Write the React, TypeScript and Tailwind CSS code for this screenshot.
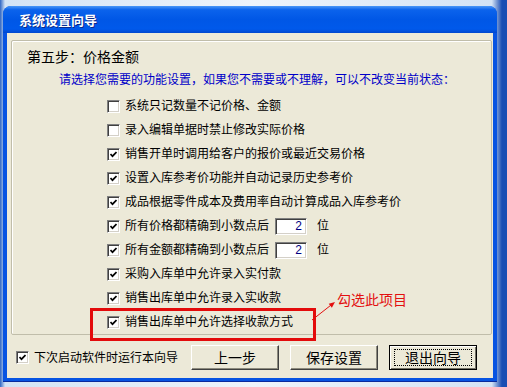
import React from "react";

const FONT = { fontFamily: '"Liberation Sans", "Noto Sans CJK SC", sans-serif' };

type Row = {
  label: string;
  checked: boolean;
  digits?: boolean;
};

const rows: Row[] = [
  { label: "系统只记数量不记价格、金额", checked: false },
  { label: "录入编辑单据时禁止修改实际价格", checked: false },
  { label: "销售开单时调用给客户的报价或最近交易价格", checked: true },
  { label: "设置入库参考价功能并自动记录历史参考价", checked: true },
  { label: "成品根据零件成本及费用率自动计算成品入库参考价", checked: true },
  { label: "所有价格都精确到小数点后", checked: true, digits: true },
  { label: "所有金额都精确到小数点后", checked: true, digits: true },
  { label: "采购入库单中允许录入实付款", checked: true },
  { label: "销售出库单中允许录入实收款", checked: true },
  { label: "销售出库单中允许选择收款方式", checked: true },
];

function CheckBox({ checked }: { checked: boolean }) {
  return (
    <span className="flex h-[13px] w-[13px] shrink-0 items-center justify-center border border-t-[#808080] border-l-[#808080] border-b-white border-r-white bg-white shadow-[inset_1px_1px_0_#404040,inset_-1px_-1px_0_#d4d0c8]">
      {checked && (
        <svg width="7" height="7" viewBox="0 0 7 7">
          <path d="M0.5 3 L2.5 5.2 L6.5 1" fill="none" stroke="#000" strokeWidth="1.7" />
        </svg>
      )}
    </span>
  );
}

function Button({ label, focused }: { label: string; focused?: boolean }) {
  return (
    <div
      className={
        focused
          ? "flex h-[25px] w-[88px] items-center justify-center border border-black bg-[#ece9d8] shadow-[inset_1px_1px_0_#fff,inset_-1px_-1px_0_#716f64]"
          : "flex h-[25px] w-[88px] items-center justify-center border border-t-white border-l-white border-b-[#404040] border-r-[#404040] bg-[#ece9d8] shadow-[inset_-1px_-1px_0_#8c8a7d]"
      }
    >
      <span
        className={
          focused
            ? "flex h-[17px] w-[78px] items-center justify-center border border-dotted border-black text-[14px] leading-[16px] text-black"
            : "text-[14px] leading-[16px] text-black"
        }
      >
        {label}
      </span>
    </div>
  );
}

export default function App() {
  return (
    <div
      style={FONT}
      className="h-[387px] w-[507px] overflow-hidden bg-[linear-gradient(90deg,#2f66c4_0%,#d3e3f5_1%,#eef4fb_50%,#d3e3f5_97%,#1a4db3_99%)] pl-[3px] pt-[6px]"
    >
      <div className="flex h-[376px] w-[494px] flex-col rounded-t-[8px] border-b border-[#0a2a9c] bg-[#0653e2]">
        {/* title bar */}
        <div className="flex h-[27px] shrink-0 items-center rounded-t-[8px] bg-[linear-gradient(180deg,#4a97f7_0%,#0b63ec_14%,#0057e6_50%,#0059eb_85%,#0047cf_100%)] pl-[16px] pt-[2px]">
          <span className="text-[13px] font-bold leading-[16px] text-white [text-shadow:1px_1px_0_#0b2a8a]">
            系统设置向导
          </span>
        </div>

        {/* client area */}
        <div className="relative mx-[4px] mb-[3px] flex flex-1 flex-col bg-[#ece9d8] pl-[4px] pr-[1px] pt-[7px]">
          <div className="flex h-[295px] flex-col rounded-[2px] border border-[#c0bdaa] pl-[15px] pt-[8px] shadow-[inset_1px_1px_0_#fff]">
            <div className="text-[14px] leading-[16px] text-black">第五步：价格金额</div>
            <div className="mt-[8px] pl-[32px] text-[12px] leading-[14px] text-[#0000c8]">
              请选择您需要的功能设置，如果您不需要或不理解，可以不改变当前状态：
            </div>
            <div className="mt-[7px] flex flex-col pl-[80px]">
              {rows.map((r) => (
                <div key={r.label} className="flex h-[24px] items-center gap-[5px]">
                  <CheckBox checked={r.checked} />
                  <span className="whitespace-nowrap text-[12px] leading-[14px] text-black">{r.label}</span>
                  {r.digits && (
                    <>
                      <span className="ml-[1px] flex h-[17px] w-[32px] items-center justify-end border border-t-[#808080] border-l-[#808080] border-b-white border-r-white bg-white pr-[4px] text-[12px] leading-[14px] text-[#000080] shadow-[inset_1px_1px_0_#404040,inset_-1px_-1px_0_#d4d0c8]">
                        2
                      </span>
                      <span className="ml-[5px] text-[12px] leading-[14px] text-black">位</span>
                    </>
                  )}
                </div>
              ))}
            </div>
          </div>

          {/* bottom bar */}
          <div className="mt-[10px] flex h-[25px] items-center pl-[5px] pr-[15px]">
            <CheckBox checked />
            <span className="ml-[5px] text-[12px] leading-[14px] text-black">下次启动软件时运行本向导</span>
            <div className="ml-auto flex gap-[11px]">
              <Button label="上一步" />
              <Button label="保存设置" />
              <Button label="退出向导" focused />
            </div>
          </div>

          {/* annotation */}
          <div className="absolute left-[83px] top-[275px] h-[33px] w-[226px] border-[3px] border-[#e30b0b]" />
          <svg className="absolute left-[300px] top-[264px]" width="34" height="28" viewBox="0 0 34 28">
            <line x1="5" y1="23" x2="25" y2="7.3" stroke="#e31010" strokeWidth="1" />
            <polygon points="28,5 24.85,10.7 21.75,6.7" fill="#e31010" />
          </svg>
          <div className="absolute left-[330px] top-[259px] text-[14px] leading-[16px] text-[#e31010]">勾选此项目</div>
        </div>
      </div>
    </div>
  );
}
